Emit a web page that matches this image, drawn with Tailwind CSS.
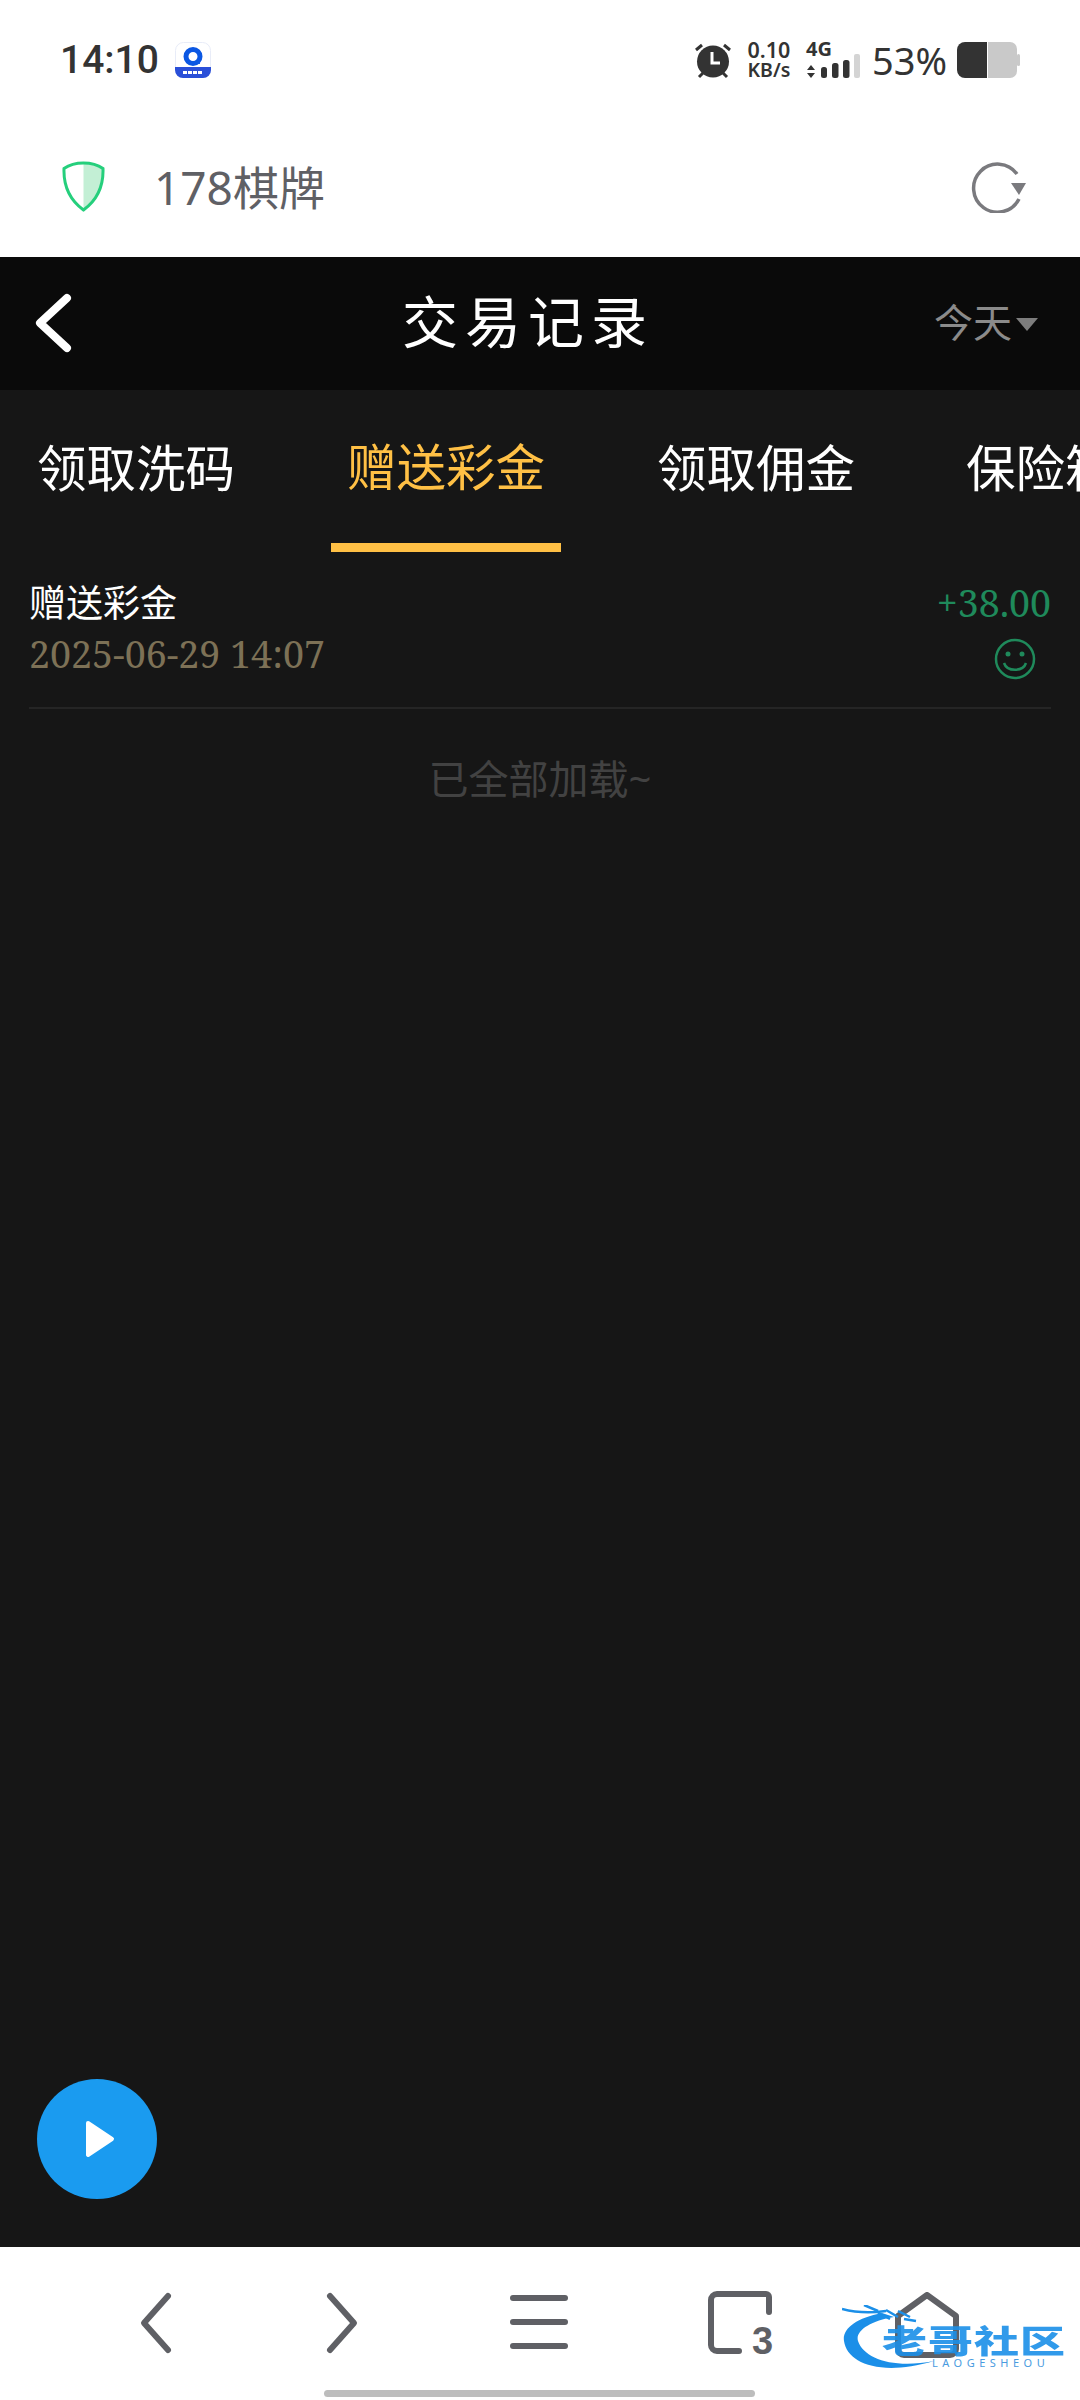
<!DOCTYPE html>
<html lang="zh-CN"><head><meta charset="utf-8"><script src="https://cdn.jsdelivr.net/npm/@tailwindcss/browser@4"></script></head>
<body class="m-0 bg-white">
<div class="relative w-[1080px] h-[2400px] overflow-hidden flex flex-col font-['Noto_Sans','Noto_Sans_CJK_SC',sans-serif]">
  <!-- status bar -->
  <div class="h-[122px] shrink-0 bg-white flex items-center pl-[60px] pr-[60px] pb-[2px]">
    <span class="text-[39px] leading-none font-medium text-[#333] font-['Roboto','Noto_Sans',sans-serif]">14:10</span>
    <svg class="ml-[16px]" width="36" height="36" viewBox="0 0 36 36"><rect x="0.500" y="0.500" width="35" height="35" rx="8" fill="#fff" stroke="#e8ecf8" stroke-width="1"/><path d="M0 25h36v3a8 8 0 0 1-8 8H8a8 8 0 0 1-8-8z" fill="#2a4fd8"/><circle cx="18" cy="14.500" r="7" fill="none" stroke="#0b57e3" stroke-width="5"/><path d="M18 21l7-5v6z" fill="#0b57e3"/><path d="M8 30.500h20" stroke="#fff" stroke-width="3" stroke-dasharray="4 1"/></svg>
    <div class="ml-auto flex items-center">
      <svg width="38" height="38" viewBox="0 0 38 38"><circle cx="19" cy="20.500" r="16" fill="#333"/><path d="M18 11v11h8" fill="none" stroke="#fff" stroke-width="3"/><path d="M2 9l6-5M36 9l-6-5M5 36l4-4M33 36l-4-4" stroke="#333" stroke-width="3" fill="none"/></svg>
      <div class="ml-[14px] w-[46px] flex flex-col items-center text-[#333] font-semibold text-[21.500px] leading-[20px] font-['Noto_Sans',sans-serif]"><span>0.10</span><span class="text-[19.500px]">KB/s</span></div>
      <div class="ml-[14px] relative w-[54px] h-[36px]">
        <span class="absolute left-0 top-[-4px] text-[20px] font-bold leading-[22px] text-[#333]">4G</span>
        <svg class="absolute left-0 top-0" width="54" height="36" viewBox="0 0 54 36"><path d="M1 28l4-5 4 5zM1 31l4 5 4-5z" fill="#333"/><rect x="15" y="25" width="6" height="11" rx="2.500" fill="#333"/><rect x="26" y="21" width="6.500" height="15" rx="2.500" fill="#333"/><rect x="37" y="18" width="6.500" height="18" rx="2.500" fill="#333"/><rect x="48" y="12" width="6" height="24" rx="2" fill="#d4d4d4"/></svg>
      </div>
      <span class="ml-[12px] text-[38px] leading-none text-[#333]">53%</span>
      <svg class="ml-[10px]" width="63" height="36" viewBox="0 0 63 36"><path d="M8 0H30V36H8a8 8 0 0 1-8-8V8a8 8 0 0 1 8-8z" fill="#333"/><path d="M31 0h22a7 7 0 0 1 7 7v22a7 7 0 0 1-7 7H31z" fill="#c9c9c9"/><rect x="60" y="12" width="3" height="12" rx="1.500" fill="#c9c9c9"/></svg>
    </div>
  </div>
  <!-- address bar -->
  <div class="h-[135px] shrink-0 bg-white flex items-center pl-[62px] pr-[53px] pb-[6px]">
    <svg width="44" height="52" viewBox="0 0 44 52"><path d="M21.500 2C14 2 7 4 2 7.500 1.500 22 5 37 21.500 49V2z" fill="#fff"/><path d="M21.500 2C29 2 36 4 41 7.500 41.500 22 38 37 21.500 49V2z" fill="#c3efd5"/><path d="M21.500 2C29 2 36 4 41 7.500 41.500 22 38 37 21.500 49 5 37 1.500 22 2 7.500 7 4 14 2 21.500 2z" fill="none" stroke="#25cf7c" stroke-width="3"/></svg>
    <span class="ml-[48px] text-[46px] leading-none text-[#5f6065]">178棋牌</span>
    <svg class="ml-auto" width="56" height="52" viewBox="0 0 56 52"><path d="M49 37A24 24 0 1 1 47 12" transform="translate(-1 1)" fill="none" stroke="#7a7a7e" stroke-width="3.500"/><path d="M40 22h15l-7 12z" fill="#7a7a7e"/></svg>
  </div>
  <!-- header -->
  <div class="relative h-[133px] shrink-0 bg-[#0a0a0a] flex items-center justify-center">
    <svg class="absolute left-[34px] top-[36px]" width="40" height="60" viewBox="0 0 40 60"><path d="M33 5 6 30l27 25" fill="none" stroke="#fff" stroke-width="8" stroke-linecap="round" stroke-linejoin="round"/></svg>
    <span class="ml-[-24px] mb-[5px] text-[56px] leading-none text-white tracking-[7px]">交易记录</span>
    <div class="absolute left-[934px] top-[45px] flex items-center">
      <span class="text-[39px] leading-none text-[#8b8b8b]">今天</span>
      <span class="ml-[4px] mt-[6px] w-0 h-0 border-x-[11px] border-x-transparent border-t-[13px] border-t-[#7d7d7d]"></span>
    </div>
  </div>
  <!-- content -->
  <div class="relative flex-1 bg-[#161616] flex flex-col">
    <div class="h-[168px] shrink-0 flex gap-[80px] pl-[21px] overflow-hidden">
      <div class="w-[230px] shrink-0 h-[162px] flex items-center justify-center text-[49.500px] leading-none text-white pb-[5px]">领取洗码</div>
      <div class="w-[230px] shrink-0 h-[162px] flex items-center justify-center text-[49.500px] leading-none text-[#ffc045] border-b-[9px] border-[#ffc045] pt-[3px]">赠送彩金</div>
      <div class="w-[230px] shrink-0 h-[162px] flex items-center justify-center text-[49.500px] leading-none text-white pb-[5px]">领取佣金</div>
      <div class="w-[230px] shrink-0 h-[162px] flex items-center pl-[15px] text-[49.500px] leading-none text-white pb-[5px] whitespace-nowrap">保险箱</div>
    </div>
    <div class="mx-[29px] h-[151px] border-b-[2px] border-[#252525] flex justify-between">
      <div class="flex flex-col pt-[22px]">
        <span class="text-[37px] leading-[46px] text-white">赠送彩金</span>
        <span class="mt-[5px] text-[37.600px] leading-[46px] text-[#7d7156] font-['Noto_Serif','Liberation_Serif',serif]">2025-06-29 14:07</span>
      </div>
      <div class="flex flex-col items-end pt-[22px]">
        <span class="text-[37.500px] leading-[46px] text-[#1f8a5b] font-['Noto_Serif','Liberation_Serif',serif]">+38.00</span>
        <svg class="mt-[12px] mr-[15px]" width="42" height="42" viewBox="0 0 42 42" fill="none" stroke="#1f8a5b" stroke-width="2.500"><circle cx="21" cy="21" r="19"/><circle cx="14" cy="16" r="2.500" fill="#1f8a5b" stroke="none"/><circle cx="28" cy="16" r="2.500" fill="#1f8a5b" stroke="none"/><path d="M10 25c3 9 19 9 22 0"/></svg>
      </div>
    </div>
    <div class="mt-[50px] text-center text-[40px] leading-none text-[#424242]">已全部加载~</div>
    <div class="absolute left-[37px] top-[1689px] w-[120px] h-[120px] rounded-full bg-[#1a9bf0] flex items-center justify-center">
      <svg class="ml-[6px]" width="30" height="38" viewBox="0 0 30 38"><path d="M3 3l24 16L3 35z" fill="#fff" stroke="#fff" stroke-width="4" stroke-linejoin="round"/></svg>
    </div>
  </div>
  <!-- bottom bar -->
  <div class="relative h-[153px] shrink-0 bg-white">
    <svg class="absolute left-[138px] top-[44px]" width="36" height="64" viewBox="0 0 36 64"><path d="M30 5 6 32l24 27" fill="none" stroke="#5f6065" stroke-width="6" stroke-linecap="round" stroke-linejoin="round"/></svg>
    <svg class="absolute left-[324px] top-[44px]" width="36" height="64" viewBox="0 0 36 64"><path d="M6 5l24 27L6 59" fill="none" stroke="#5f6065" stroke-width="6" stroke-linecap="round" stroke-linejoin="round"/></svg>
    <div class="absolute left-[510px] top-[48px] w-[58px] flex flex-col gap-[18px]"><div class="h-[6px] rounded-full bg-[#5f6065]"></div><div class="h-[6px] rounded-full bg-[#5f6065]"></div><div class="h-[6px] rounded-full bg-[#5f6065]"></div></div>
    <svg class="absolute left-[708px] top-[44px]" width="64" height="64" viewBox="0 0 64 64"><path d="M31 60H9a6 6 0 0 1-6-6V9a6 6 0 0 1 6-6h49a3 3 0 0 1 3 3v15" fill="none" stroke="#5f6065" stroke-width="6" stroke-linecap="round" stroke-linejoin="round"/></svg>
    <span class="absolute left-[752px] top-[75px] text-[38px] leading-[38px] font-semibold text-[#5f6065] font-['Liberation_Sans',sans-serif]">3</span>
    <svg class="absolute left-[895px] top-[45px]" width="64" height="66" viewBox="0 0 64 66"><path d="M3 24 32 3l29 21v33a6 6 0 0 1-6 6H9a6 6 0 0 1-6-6z" fill="none" stroke="#5f6065" stroke-width="6" stroke-linejoin="round"/></svg>
    <!-- watermark -->
    <svg class="absolute left-[842px] top-[58px] blur-[0.6px]" width="120" height="70" viewBox="0 0 120 70"><path d="M40 8C14 13 0 24 2 36c3 22 36 36 90 20-40 8-70-2-76-20C13 26 28 16 52 12z" fill="#1b8fe8"/><path d="M0 4c15 4 30 4 44 2M22 0l14 6M36 8l12 6M44 5l12 7M56 6l12 6M62 14l12 2" stroke="#1b8fe8" stroke-width="2.500" fill="none"/></svg>
    <div class="absolute left-[882px] top-[71px] text-[45px] leading-[46px] font-black text-[#1b8fe8]/90 tracking-[1px] whitespace-nowrap blur-[0.6px] scale-y-[0.7]">老哥社区</div>
    <div class="absolute left-[932px] top-[110px] text-[11px] leading-[12px] text-[#4a9be0] tracking-[4.500px] whitespace-nowrap">LAOGESHEOU</div>
    <div class="absolute left-[324px] top-[143px] w-[431px] h-[7px] rounded-full bg-[#bdbdbd]"></div>
  </div>
</div>
</body></html>
